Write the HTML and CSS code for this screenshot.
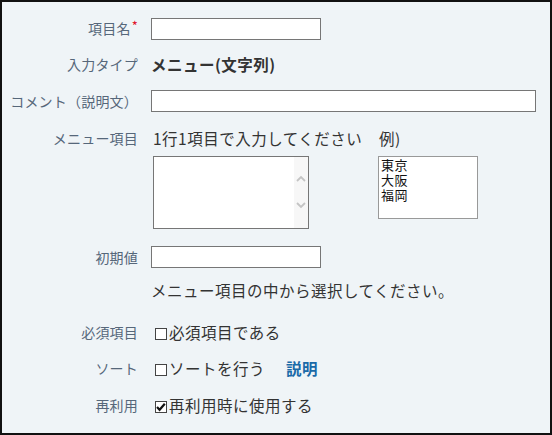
FILE: index.html
```html
<!DOCTYPE html>
<html lang="ja">
<head>
<meta charset="utf-8">
<link rel="stylesheet" href="styles.css">
</head>
<body>
<div class="panel">
  <div class="row r1">
    <div class="label">項目名<span class="req">*</span></div>
    <div class="value"><div class="input short"></div></div>
  </div>
  <div class="row r2">
    <div class="label">入力タイプ</div>
    <div class="value"><span class="bold">メニュー(文字列)</span></div>
  </div>
  <div class="row r3">
    <div class="label">コメント（説明文）</div>
    <div class="value"><div class="input long"></div></div>
  </div>
  <div class="row r4">
    <div class="label">メニュー項目</div>
    <div class="value menu">
      <div class="menu-left">
        <div class="line">1行1項目で入力してください</div>
        <div class="ta">
          <div class="ta-body"></div>
          <div class="sb">
            <svg width="14" height="73" viewBox="0 0 14 73"><path d="M3 24 L7 20 L11 24" fill="none" stroke="#c4c4c4" stroke-width="1.8"/><path d="M3 46 L7 50 L11 46" fill="none" stroke="#c4c4c4" stroke-width="1.8"/></svg>
          </div>
        </div>
      </div>
      <div class="menu-right">
        <div class="line">例)</div>
        <div class="example">東京<br>大阪<br>福岡</div>
      </div>
    </div>
  </div>
  <div class="row r5">
    <div class="label">初期値</div>
    <div class="value"><div class="input short"></div></div>
  </div>
  <div class="row r6">
    <div class="label"></div>
    <div class="value">メニュー項目の中から選択してください。</div>
  </div>
  <div class="row r7">
    <div class="label">必須項目</div>
    <div class="value"><span class="cb"></span>必須項目である</div>
  </div>
  <div class="row r8">
    <div class="label">ソート</div>
    <div class="value"><span class="cb"></span>ソートを行う<a class="link">説明</a></div>
  </div>
  <div class="row r9">
    <div class="label">再利用</div>
    <div class="value"><span class="cb checked"><svg width="12" height="12" viewBox="0 0 12 12"><path d="M2 6 L4.6 8.8 L9.8 2.8" fill="none" stroke="#111" stroke-width="2.2"/></svg></span>再利用時に使用する</div>
  </div>
</div>
</body>
</html>
```
FILE: styles.css
```css
html, body {
  margin: 0;
  padding: 0;
}
body {
  font-family: "Noto Sans CJK JP", "Noto Sans", sans-serif;
  color: #333;
}
.panel {
  box-sizing: border-box;
  width: 552px;
  height: 435px;
  border: 2px solid #111;
  background: #eff4f7;
  padding-top: 15px;
}
.row {
  display: grid;
  grid-template-columns: 136px 1fr;
  column-gap: 13px;
  align-items: center;
}
.label {
  text-align: right;
  font-size: 14px;
  letter-spacing: 0.2px;
  color: #56677a;
  line-height: 22px;
  white-space: nowrap;
}
.req {
  color: #e0102a;
  font-size: 13px;
  position: relative;
  top: -3px;
  margin-left: 1px;
}
.value {
  font-size: 15.5px;
  letter-spacing: 0.5px;
  line-height: 22px;
  white-space: nowrap;
}
.bold {
  font-weight: bold;
  color: #333;
}
.input {
  box-sizing: border-box;
  height: 22px;
  background: #fff;
  border: 1px solid #767676;
}
.input.short { width: 170px; }
.input.long { width: 385px; }
.r2 { margin-top: 13px; }
.r3 { margin-top: 15px; }
.r4 { margin-top: 15px; align-items: start; }
.r5 { margin-top: 17px; }
.r6 { margin-top: 11px; }
.r7 { margin-top: 20px; }
.r8 { margin-top: 14px; }
.r9 { margin-top: 15px; }
.menu {
  display: flex;
  padding-left: 2px;
}
.menu-left {
  width: 225px;
}
.ta {
  box-sizing: border-box;
  margin-top: 7px;
  width: 156px;
  height: 73px;
  background: #fff;
  border: 1px solid #767676;
  display: flex;
}
.ta-body { flex: 1; }
.sb {
  width: 14px;
  background: #f7f7f7;
  display: flex;
}
.menu-right .line {
  padding-left: 1px;
}
.example {
  box-sizing: border-box;
  margin-top: 7px;
  width: 100px;
  height: 63px;
  background: #fff;
  border: 1px solid #999;
  color: #111;
  font-size: 13px;
  letter-spacing: 0.5px;
  line-height: 15px;
  padding: 0 0 0 2px;
}
.cb {
  box-sizing: border-box;
  display: inline-block;
  width: 12px;
  height: 12px;
  border: 1px solid #444;
  background: #fff;
  margin-left: 4px;
  margin-right: 2px;
  vertical-align: -1px;
  position: relative;
}
.cb svg {
  position: absolute;
  left: -1px;
  top: -1px;
}
.link {
  color: #1a6aa8;
  font-weight: bold;
  margin-left: 21px;
}
```
